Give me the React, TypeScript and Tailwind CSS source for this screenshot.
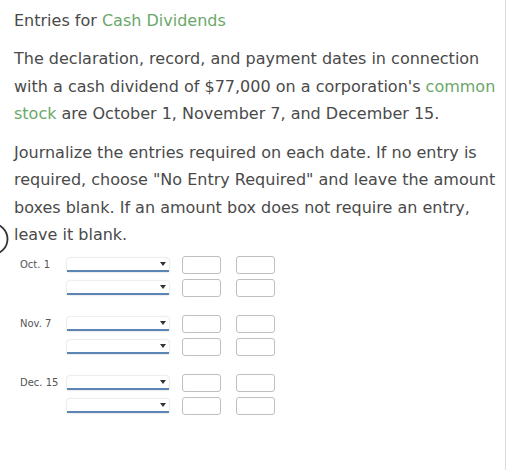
const groups = [
  { label: 'Oct. 1' },
  { label: 'Nov. 7' },
  { label: 'Dec. 15' },
];

function SelectLine() {
  return (
    <div className="relative h-[14px] w-[102px] rounded-t-[3px] border-b-2 border-[#5b86b3] bg-white shadow-[0_0_2px_rgba(0,0,0,0.25)]">
      <span className="absolute right-[3px] top-[4px] h-0 w-0 border-x-[3px] border-t-[4px] border-x-transparent border-t-[#333]" />
    </div>
  );
}

function AmountBox() {
  return <div className="h-[18px] w-[39px] rounded-[3px] border border-[#bfbfbf] bg-white" />;
}

function EntryRow({ label }: { label?: string }) {
  return (
    <div className="flex h-[18px] items-center">
      <span className="w-[67px] shrink-0 whitespace-nowrap pl-[20px] text-[10px] text-[#555]">{label}</span>
      <SelectLine />
      <div className="ml-[13px] flex gap-[15px]">
        <AmountBox />
        <AmountBox />
      </div>
    </div>
  );
}

export default function App() {
  return (
    <div
      className="relative h-[470px] w-[506px] overflow-hidden border-r border-[#dcdcdc] bg-white text-[#4a4a4a]"
      style={{ fontFamily: '"DejaVu Sans", Verdana, sans-serif' }}
    >
      <div className="pl-[14px] pr-[4px] pt-[10px]">
        <h1 className="text-[16px] leading-[22px]">
          Entries for <span className="text-[#6aa86a]">Cash Dividends</span>
        </h1>
        <p className="mt-[13px] text-[16px] leading-[27.5px]">
          The declaration, record, and payment dates in connection with a cash dividend of $77,000 on a
          corporation's <span className="text-[#6aa86a]">common stock</span> are October 1, November 7, and
          December 15.
        </p>
        <p className="mt-[11px] text-[16px] leading-[27.5px]">
          Journalize the entries required on each date. If no entry is required, choose "No Entry Required" and
          leave the amount boxes blank. If an amount box does not require an entry, leave it blank.
        </p>
      </div>
      <svg className="absolute left-0 top-[222px]" width="12" height="34" viewBox="0 0 12 34">
        <circle cx="-8" cy="17" r="15.5" fill="none" stroke="#333" strokeWidth="1.8" />
      </svg>
      <div className="mt-[7px] flex flex-col gap-[18px]">
        {groups.map((g) => (
          <div key={g.label} className="flex flex-col gap-[5px]">
            <EntryRow label={g.label} />
            <EntryRow />
          </div>
        ))}
      </div>
    </div>
  );
}
